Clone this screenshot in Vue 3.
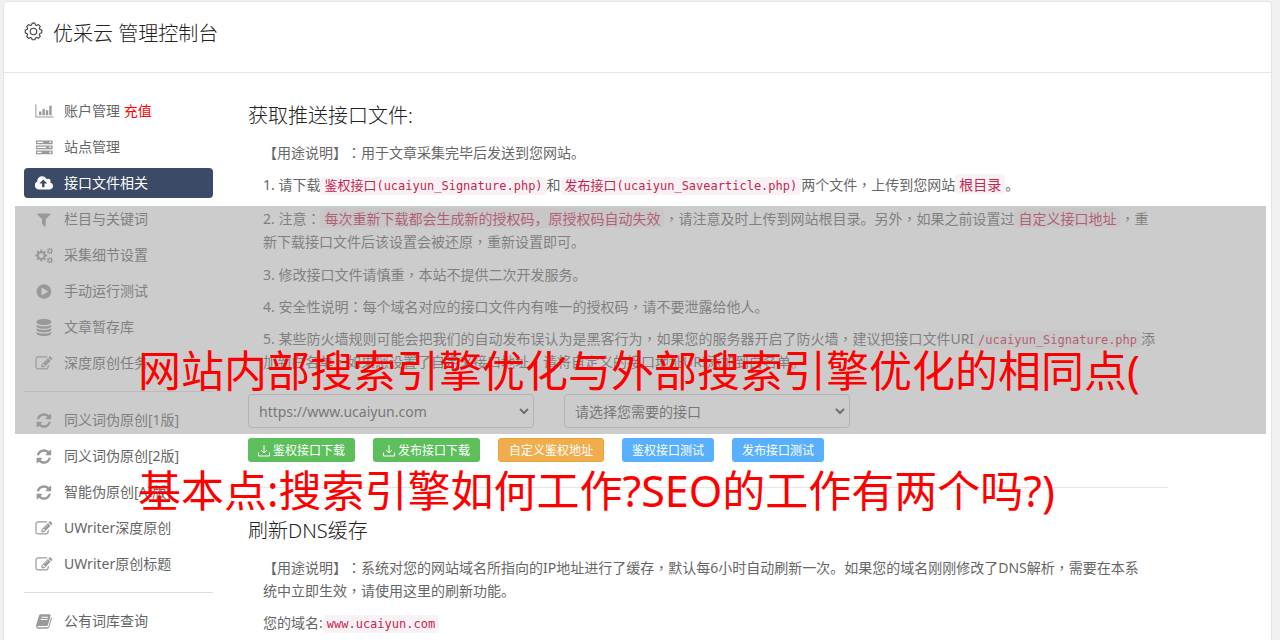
<script setup>
import { ref } from 'vue'

const edit = 'M888 1184l116-116-152-152-116 116v56h96v96h56zm440-720q-16-16-33 1l-350 350q-17 17-1 33t33-1l350-350q17-17 1-33zm80 594v190q0 119-84.5 203.5t-203.5 84.5h-832q-119 0-203.5-84.5t-84.5-203.5v-832q0-119 84.5-203.5t203.5-84.5h832q63 0 117 25 15 7 18 23 3 17-9 29l-49 49q-14 14-32 8-23-6-45-6h-832q-66 0-113 47t-47 113v832q0 66 47 113t113 47h832q66 0 113-47t47-113v-126q0-13 9-22l64-64q15-15 35-7t20 29zm-96-738l288 288-672 672h-288v-288zm444 132l-92 92-288-288 92-92q28-28 68-28t68 28l152 152q28 28 28 68t-28 68z'
const refresh = 'M1639 1056q0 5-1 7-64 268-268 434.5t-478 166.5q-146 0-282.5-55t-243.5-157l-129 129q-19 19-45 19t-45-19-19-45v-448q0-26 19-45t45-19h448q26 0 45 19t19 45-19 45l-137 137q71 66 161 102t187 36q134 0 250-65t186-179q11-17 53-117 8-23 30-23h192q13 0 22.5 9.5t9.5 22.5zm25-800v448q0 26-19 45t-45 19h-448q-26 0-45-19t-19-45 19-45l138-138q-148-137-349-137-134 0-250 65t-186 179q-11 17-53 117-8 23-30 23h-199q-13 0-22.5-9.5t-9.5-22.5v-7q65-268 270-434.5t480-166.5q146 0 284 55.5t245 156.5l130-129q19-19 45-19t45 19 19 45z'

// A cog outline with square teeth, centred on (cx, cy)
function cog(cx, cy, outer, inner, hole, teeth) {
  const pts = []
  const step = (Math.PI * 2) / teeth
  for (let i = 0; i < teeth; i++) {
    const a = i * step
    for (const [r, o] of [[inner, -0.3], [outer, -0.2], [outer, 0.2], [inner, 0.3]]) {
      pts.push(`${Math.round(cx + r * Math.cos(a + o * step))} ${Math.round(cy + r * Math.sin(a + o * step))}`)
    }
  }
  return `M${pts.join('L')}zM${cx - hole} ${cy}a${hole} ${hole} 0 1 0 ${2 * hole} 0a${hole} ${hole} 0 1 0 ${-2 * hole} 0z`
}

const paths = {
  chart: 'M0 128h110v1300h1810v110H0zM384 900h256v400H384zM740 640h256v660H740zM1100 770h256v530h-256zM1460 300h256v1000h-256z',
  server: 'M60 160h1752v400H60zM190 290v120h620v-120zM1480 270v160h160v-160zM60 690h1752v400H60zM190 820v120h940v-120zM1480 800v160h160v-160zM60 1220h1752v400H60zM190 1350v120h460v-120zM1480 1330v160h160v-160z',
  cloud: 'M1216 864q0-14-9-23l-352-352q-9-9-23-9t-23 9l-351 351q-10 12-10 24 0 14 9 23t23 9h224v352q0 13 9.5 22.5t22.5 9.5h192q13 0 22.5-9.5t9.5-22.5v-352h224q13 0 22.5-9.5t9.5-22.5zm640 288q0 159-112.5 271.5t-271.5 112.5h-1088q-185 0-316.5-131.5t-131.5-316.5q0-130 70-240t188-165q-2-30-2-43 0-212 150-362t362-150q156 0 285.5 87t188.5 231q71-62 166-62 106 0 181 75t75 181q0 76-41 138 130 31 213.5 135.5t83.5 238.5z',
  filter: 'M1595 295q17 41-14 70l-493 493v742q0 42-39 59-13 5-25 5-27 0-45-19l-256-256q-19-19-19-45v-486l-493-493q-31-29-14-70 17-39 59-39h1280q42 0 59 39z',
  cogs: cog(620, 900, 640, 470, 250, 8) + cog(1530, 420, 350, 240, 120, 7) + cog(1530, 1400, 350, 240, 120, 7),
  play: 'M896 128q209 0 385.5 103t279.5 279.5 103 385.5-103 385.5-279.5 279.5-385.5 103-385.5-103-279.5-279.5-103-385.5 103-385.5 279.5-279.5 385.5-103zm384 823q32-18 32-55t-32-55l-544-320q-31-19-64-1-32 19-32 56v640q0 37 32 56 16 8 32 8 17 0 32-9z',
  database: 'M896 768q237 0 443-43t325-127v170q0 69-103 128t-280 93.5-385 34.5-385-34.5-280-93.5-103-128v-170q119 84 325 127t443 43zm0 768q237 0 443-43t325-127v170q0 69-103 128t-280 93.5-385 34.5-385-34.5-280-93.5-103-128v-170q119 84 325 127t443 43zm0-384q237 0 443-43t325-127v170q0 69-103 128t-280 93.5-385 34.5-385-34.5-280-93.5-103-128v-170q119 84 325 127t443 43zm0-1152q208 0 385 34.5t280 93.5 103 128v128q0 69-103 128t-280 93.5-385 34.5-385-34.5-280-93.5-103-128v-128q0-69 103-128t280-93.5 385-34.5z',
  book: 'M560 130H1480Q1640 150 1600 310L1330 1260Q1290 1380 1170 1380H300Q200 1390 210 1450Q230 1510 320 1510H1240Q1350 1510 1390 1400L1660 450Q1760 520 1720 620L1460 1510Q1400 1660 1250 1660H320Q120 1640 70 1440Q50 1350 100 1220L370 290Q420 130 560 130zM650 400L620 500H1330L1360 400zM580 640L550 740H1260L1290 640z',
  edit,
  refresh,
}

const groups = [
  [
    { icon: 'chart', label: '账户管理', extra: '充值' },
    { icon: 'server', label: '站点管理' },
    { icon: 'cloud', label: '接口文件相关', active: true },
    { icon: 'filter', label: '栏目与关键词' },
    { icon: 'cogs', label: '采集细节设置' },
    { icon: 'play', label: '手动运行测试' },
    { icon: 'database', label: '文章暂存库' },
    { icon: 'edit', label: '深度原创任务' },
  ],
  [
    { icon: 'refresh', label: '同义词伪原创[1版]' },
    { icon: 'refresh', label: '同义词伪原创[2版]' },
    { icon: 'refresh', label: '智能伪原创[AI版]' },
    { icon: 'edit', label: 'UWriter深度原创' },
    { icon: 'edit', label: 'UWriter原创标题' },
  ],
  [{ icon: 'book', label: '公有词库查询' }],
]

const buttons = [
  { label: '鉴权接口下载', kind: 'green', download: true },
  { label: '发布接口下载', kind: 'green', download: true },
  { label: '自定义鉴权地址', kind: 'orange' },
  { label: '鉴权接口测试', kind: 'blue' },
  { label: '发布接口测试', kind: 'blue' },
]

const site = ref('https://www.ucaiyun.com')
const api = ref('')
</script>

<template>
  <div class="page">
    <div class="card">
      <header class="head">
        <svg class="gear" viewBox="0 0 20 20" fill="none" stroke="currentColor" stroke-width="1.2" stroke-linejoin="round" aria-hidden="true">
          <path d="M8.6 1.2h2.8l.6 1.9 1.3.5 1.8-.9 2 2-.9 1.8.5 1.3 2 .7v2.9l-2 .7-.5 1.3.9 1.8-2 2-1.8-.9-1.3.5-.6 1.9H8.6L8 16.900l-1.300-.5-1.800.9-2-2 .9-1.800-.5-1.300-2-.7V8.500l2-.7.500-1.300-.9-1.800 2-2 1.800.9L8 3.100z" />
          <circle cx="10" cy="10" r="3.4" />
        </svg>
        <h1>优采云 管理控制台</h1>
      </header>

      <div class="body">
        <nav class="side">
          <ul v-for="(group, g) in groups" :key="g">
            <li v-for="item in group" :key="item.label">
              <a href="#" :class="{ active: item.active }">
                <svg viewBox="0 0 1920 1792" fill="currentColor" fill-rule="evenodd" aria-hidden="true"><path :d="paths[item.icon]" /></svg>
                <span>{{ item.label }} <em v-if="item.extra">{{ item.extra }}</em></span>
              </a>
            </li>
          </ul>
        </nav>

        <main class="main">
          <section>
            <h2>获取推送接口文件:</h2>
            <div class="text">
              <p>【用途说明】<span class="mark">：</span>用于文章采集完毕后发送到您网站。</p>
              <p class="coded">1. 请下载<code><b>鉴权接口</b>(ucaiyun_Signature.php)</code>和<code><b>发布接口</b>(ucaiyun_Savearticle.php)</code>两个文件<span class="mark">，</span>上传到您网站<code class="zh">根目录</code>。</p>
              <p class="coded">2. 注意<span class="mark">：</span><code class="zh">每次重新下载都会生成新的授权码，原授权码自动失效</code><span class="mark">，</span>请注意及时上传到网站根目录。另外<span class="mark">，</span>如果之前设置过<code class="zh">自定义接口地址</code><span class="mark">，</span>重<br>新下载接口文件后该设置会被还原<span class="mark">，</span>重新设置即可。</p>
              <p>3. 修改接口文件请慎重<span class="mark">，</span>本站不提供二次开发服务。</p>
              <p>4. 安全性说明<span class="mark">：</span>每个域名对应的接口文件内有唯一的授权码<span class="mark">，</span>请不要泄露给他人。</p>
              <p>5. 某些防火墙规则可能会把我们的自动发布误认为是黑客行为<span class="mark">，</span>如果您的服务器开启了防火墙<span class="mark">，</span>建议把接口文件URI<code>/ucaiyun_Signature.php</code>添<br>加到白名单<span class="mark">，</span>如果您设置了自定义接口地址<span class="mark">，</span>请将自定义的接口地址URI添加到白名单。</p>
            </div>
            <div class="selects">
              <div class="select">
                <select v-model="site" aria-label="网站">
                  <option>https://www.ucaiyun.com</option>
                </select>
                <svg viewBox="0 0 10 7" aria-hidden="true"><path d="M1 1l4 4 4-4" /></svg>
              </div>
              <div class="select">
                <select v-model="api" aria-label="接口">
                  <option value="">请选择您需要的接口</option>
                </select>
                <svg viewBox="0 0 10 7" aria-hidden="true"><path d="M1 1l4 4 4-4" /></svg>
              </div>
            </div>
            <div class="buttons">
              <button v-for="b in buttons" :key="b.label" type="button" :class="b.kind">
                <svg v-if="b.download" viewBox="0 0 12 12" aria-hidden="true"><path d="M6 0v8M3 5l3 3 3-3M0.500 7.500v3.500h11V7.500" /></svg>
                {{ b.label }}
              </button>
            </div>
          </section>

          <section class="second">
            <h2>刷新DNS缓存</h2>
            <div class="text">
              <p>【用途说明】<span class="mark">：</span>系统对您的网站域名所指向的IP地址进行了缓存<span class="mark">，</span>默认每6小时自动刷新一次。如果您的域名刚刚修改了DNS解析<span class="mark">，</span>需要在本系<br>统中立即生效<span class="mark">，</span>请使用这里的刷新功能。</p>
              <p>您的域名:<code>www.ucaiyun.com</code></p>
            </div>
          </section>
        </main>
      </div>
    </div>

    <div class="band"></div>
    <div class="caption">网站内部搜索引擎优化与外部搜索引擎优化的相同点(<br>基本点:搜索引擎如何工作?SEO的工作有两个吗?)</div>
  </div>
</template>

<style>
body {
  margin: 0;
  overflow: hidden;
  background: #f1f1f1;
}
</style>

<style scoped>
.page {
  position: relative;
  height: 100vh;
  overflow: hidden;
  font: 14px/23px "Noto Sans", "Noto Sans CJK SC", sans-serif;
  text-spacing-trim: space-all;
  color: #666;
}
.card {
  margin: 1px 8px 0 3px;
  min-height: 100vh;
  background: #fff;
  border: 1px solid #e4e4e4;
  border-radius: 4px;
}
.head {
  display: flex;
  align-items: center;
  gap: 10px;
  height: 63px;
  padding: 0 20px 7px;
  border-bottom: 1px solid #e5e5e5;
  color: #444;
}
.gear {
  width: 19px;
  height: 19px;
  margin-bottom: 4px;
}
h1,
h2 {
  margin: 0;
  font-size: 20px;
  line-height: 28px;
  font-weight: 300;
  color: #222;
}
.body {
  display: flex;
  gap: 35px;
  padding: 23px 20px 0;
}
.side {
  flex: 0 0 189px;
}
ul {
  display: grid;
  gap: 6px;
  margin: 0;
  padding: 0;
  list-style: none;
}
ul + ul {
  margin-top: 13px;
  padding-top: 13px;
  border-top: 1px solid #ddd;
}
.side a {
  display: flex;
  align-items: center;
  gap: 10px;
  height: 30px;
  padding: 0 11px;
  border-radius: 4px;
  color: #666;
  text-decoration: none;
}
.side span {
  padding-bottom: 2px;
}
.side svg {
  width: 19px;
  height: 17px;
  color: #999;
}
.side em {
  color: #f00;
  font-style: normal;
}
.side a.active,
.side a.active svg {
  color: #fff;
}
.side a.active {
  background: #3b4a66;
}
.main {
  flex: 0 1 920px;
  padding-top: 6px;
}
.text {
  padding: 11px 0 0 15px;
  white-space: nowrap;
}
p {
  margin: 0 0 9px;
}
.coded {
  margin-bottom: 10px;
}
.coded:has(b) {
  margin-bottom: 11px;
}
.mark {
  font-family: "Noto Sans CJK TC", sans-serif;
  line-height: 1;
}
code {
  padding: 2px 4px;
  border-radius: 4px;
  background: #f9f2f4;
  color: #c7254e;
  font: 12px/17px "DejaVu Sans Mono", "Noto Sans CJK SC", monospace;
}
code b {
  font-size: 13px;
  font-weight: 400;
}
code.zh {
  padding: 0 4px;
  font-size: 14px;
  line-height: 14px;
  font-family: "Noto Sans CJK SC", monospace;
}
.selects {
  display: flex;
  gap: 30px;
  padding-top: 12px;
}
.select {
  position: relative;
  flex: 0 1 286px;
}
select {
  display: block;
  width: 100%;
  height: 34px;
  padding: 0 10px;
  appearance: none;
  border: 1px solid #ccc;
  border-radius: 4px;
  background: #fff;
  color: #555;
  font: inherit;
}
.select svg {
  position: absolute;
  right: 5px;
  top: 14px;
  width: 10px;
  height: 7px;
  fill: none;
  stroke: #444;
  stroke-width: 2;
}
.buttons {
  display: flex;
  gap: 18px;
  margin-top: 10px;
}
button {
  display: flex;
  align-items: center;
  gap: 3px;
  height: 24px;
  padding: 2px 10px 0;
  border: 0;
  border-radius: 3px;
  color: #fff;
  font: 12px/18px "Noto Sans", "Noto Sans CJK SC", sans-serif;
}
button svg {
  width: 12px;
  height: 12px;
  fill: none;
  stroke: #fff;
}
.green {
  background: #5cbf5c;
}
.orange {
  background: #f0ad4e;
  border: 1px solid #eea236;
}
.blue {
  background: #59b0ff;
}
.second {
  margin-top: 25px;
  padding-top: 29px;
  border-top: 1px solid #e5e5e5;
}
.band {
  position: absolute;
  top: 206px;
  left: 15px;
  right: 14px;
  height: 228px;
  background: rgba(153, 153, 153, 0.5);
}
.caption {
  position: absolute;
  top: 311px;
  left: 138px;
  color: #f00;
  font-size: 43px;
  line-height: 120px;
  white-space: nowrap;
}
</style>
